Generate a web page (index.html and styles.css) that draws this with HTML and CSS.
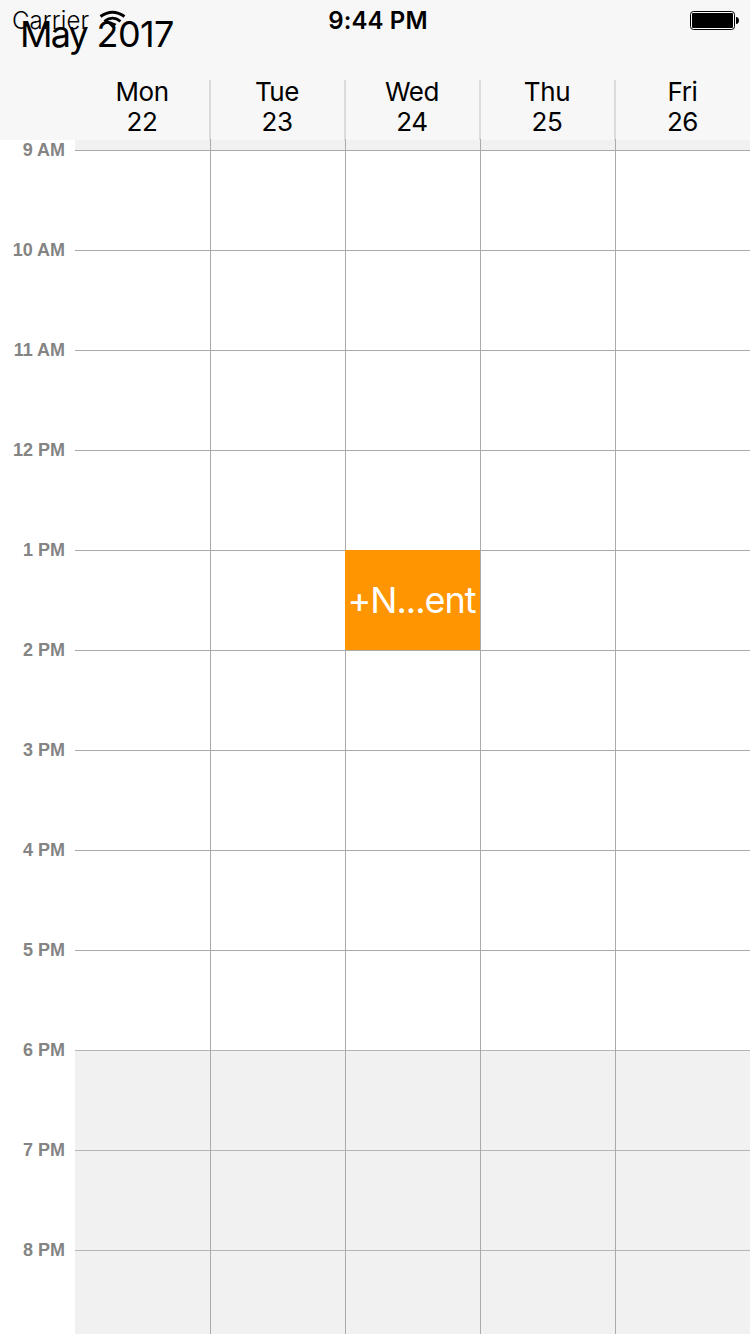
FILE: index.html
```html
<!DOCTYPE html>
<html lang="en">
<head>
<meta charset="utf-8">
<title>May 2017</title>
<link rel="stylesheet" href="styles.css">
</head>
<body>
<div class="screen">
  <header class="header">
    <div class="status">
      <div class="carrier"><span class="carrier-name">Carrier</span>
        <svg class="wifi" width="28" height="22" viewBox="0 0 28 22" fill="none" stroke="#000"><path d="M1.500 6.500Q13.500-2 25.500 6.500" stroke-width="2.800"/><path d="M5.500 11.300Q13.500 5 21.500 11.300" stroke-width="2.800"/><path d="M13.500 18L9.500 14Q13.500 11 17.500 14Z" fill="#000" stroke="none"/></svg>
      </div>
      <div class="clock">9:44 PM</div>
      <svg class="battery" width="50" height="20" viewBox="0 0 50 20"><rect x=".5" y=".5" width="44" height="18" rx="3" fill="#fff" stroke="#000"/><rect x="2" y="2" width="41" height="15" rx="1" fill="#000"/><path d="M46 6c4 0 4 7 0 7Z" fill="#000"/></svg>
    </div>
    <h1 class="month"><span class="month-name">May</span> 2017</h1>
    <div class="days">
      <div class="day"><span>Mon</span><span>22</span></div>
      <div class="day"><span>Tue</span><span>23</span></div>
      <div class="day"><span>Wed</span><span>24</span></div>
      <div class="day"><span>Thu</span><span>25</span></div>
      <div class="day"><span>Fri</span><span>26</span></div>
    </div>
  </header>
  <main class="calendar">
    <div class="hours">
      <div>9 AM</div><div>10 AM</div><div>11 AM</div><div>12 PM</div><div>1 PM</div><div>2 PM</div><div>3 PM</div><div>4 PM</div><div>5 PM</div><div>6 PM</div><div>7 PM</div><div>8 PM</div>
    </div>
    <div class="grid">
      <div class="early"></div>
      <div class="row"></div><div class="row"></div><div class="row"></div><div class="row"></div><div class="row"></div><div class="row"></div><div class="row"></div><div class="row"></div><div class="row"></div>
      <div class="row off"></div><div class="row off"></div><div class="row off"></div>
      <div class="columns"><div></div><div></div><div><div class="event">+N...ent</div></div><div></div><div></div></div>
    </div>
  </main>
</div>
</body>
</html>
```
FILE: styles.css
```css
* { box-sizing: border-box; }
body { margin: 0; background: #fff; color: #000; font-family: Inter, "Liberation Sans", sans-serif; }
.screen { width: 750px; height: 1334px; overflow: hidden; display: flex; flex-direction: column; }
.header { height: 140px; flex: none; background: #f7f7f7; display: flex; flex-direction: column; }
.status { height: 40px; flex: none; display: grid; grid-template-columns: 1fr auto 1fr; padding: 0 10px 0 12px; line-height: 42px; }
.carrier { display: flex; font-size: 24px; font-weight: 300; letter-spacing: .1px; }
.carrier-name { width: 87px; }
.wifi { margin-top: 10px; }
.clock { font-size: 24px; font-weight: 600; letter-spacing: .1px; margin-left: 4px; }
.battery { justify-self: end; margin-top: 11px; }
/* The month title overlaps the status bar. */
.month { margin: -28px 0 0 20px; height: 68px; flex: none; font-size: 36px; font-weight: 400; line-height: 45px; letter-spacing: -.6px; white-space: nowrap; }
.month-name { letter-spacing: -1.8px; }
.days { height: 60px; margin-left: 75px; display: grid; grid-template-columns: repeat(5, 135px); }
.day { display: flex; flex-direction: column; align-items: center; font-size: 26px; letter-spacing: -.4px; border-right: 2px solid #dcdcdc; width: 136px; }
.day:last-child { border: 0; width: 135px; }
.day span { height: 30px; line-height: 24px; }
.calendar { flex: 1; display: flex; min-height: 0; }
.hours { width: 75px; padding-right: 10px; color: #848484; font: bold 18px/20px "Liberation Sans", Arial, sans-serif; text-align: right; }
.hours div { height: 100px; }
.grid { flex: 1; position: relative; }
.early { height: 10px; background: #f1f1f1; }
.row { height: 100px; border-top: 1px solid #aaa; }
.off { background: #f1f1f1; border-color: #b5b5b5; }
.columns { position: absolute; top: -1px; left: 0; right: 0; bottom: 0; display: grid; grid-template-columns: repeat(5, 135px); }
.columns > div { width: 136px; border-right: 1px solid #aaa; }
.columns > div:last-child { border: 0; width: 135px; }
.event { margin-top: 411px; height: 100px; width: 135px; padding-right: 2px; background: #ff9500; color: #fff; font-size: 36px; line-height: 101px; letter-spacing: -1px; text-align: center; }
```
